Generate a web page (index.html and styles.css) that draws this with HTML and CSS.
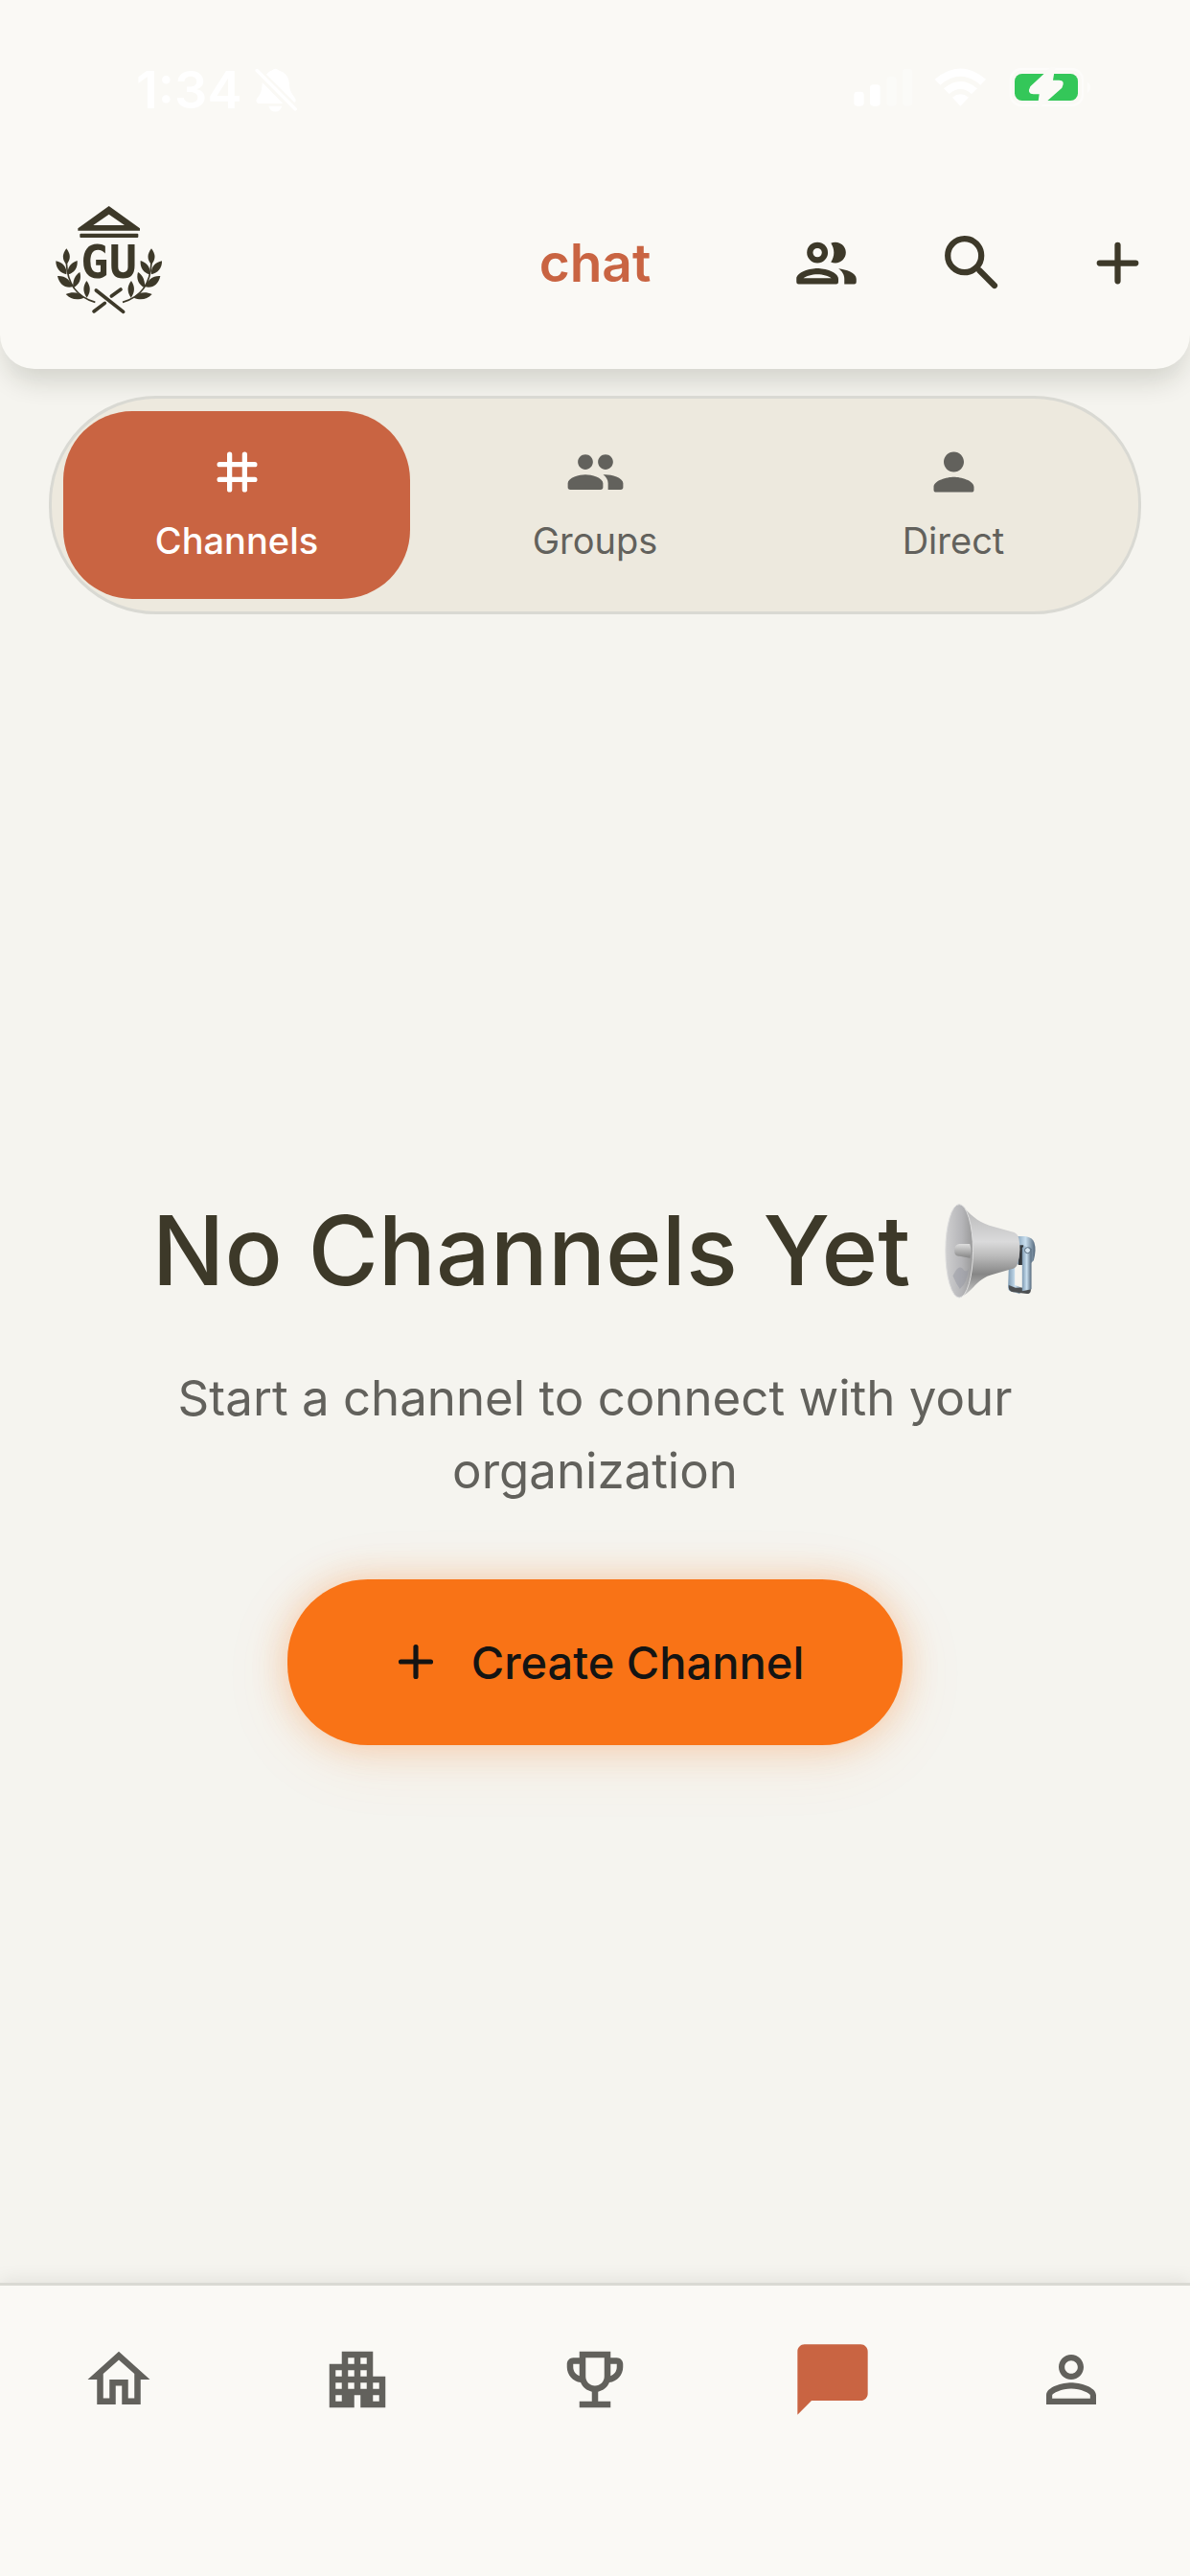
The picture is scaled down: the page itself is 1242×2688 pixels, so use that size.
FILE: index.html
```html
<!DOCTYPE html>
<html lang="en">
<head>
<meta charset="utf-8">
<meta name="viewport" content="width=device-width, initial-scale=1">
<title>Chat</title>
<link rel="stylesheet" href="styles.css">
</head>
<body>
<header class="top">
  <div class="status">
    <div class="status-left">
      <span class="clock">1:34</span>
      <svg class="bell" viewBox="0 0 126 138" aria-hidden="true">
        <path d="M34 22C40 14 46 12 51 10Q61 0 72 10C92 16 102 30 103 50C104 74 112 80 120 92Q126 104 118 106L34 22Z"/>
        <path d="M22 46L84 109H10Q0 104 6 94C16 82 21 74 22 46Z"/>
        <path d="M41 117H81Q76 134 61 134T41 117Z"/>
        <path d="M6 10L121 126" class="slash"/>
      </svg>
    </div>
    <svg class="indicators" viewBox="0 0 900 270" aria-hidden="true">
      <g fill="#fff">
        <rect x="94" y="140" width="31" height="45" rx="10"/>
        <rect x="144" y="118" width="32" height="67" rx="10"/>
        <rect x="196" y="93" width="31" height="92" rx="10" opacity=".3"/>
        <rect x="246" y="68" width="31" height="117" rx="10" opacity=".3"/>
        <path d="M347 101Q427 34 507 101L490 119Q427 66 364 119Z"/>
        <path d="M375 130Q427 86 480 130L462 147Q427 117 392 147Z"/>
        <path d="M402 158Q427 138 453 158L427 185Z"/>
        <path d="M824 110Q834 114 834 126T824 144Z" opacity=".5"/>
      </g>
      <rect x="584" y="69" width="226" height="114" rx="34" fill="none" stroke="#fff" stroke-width="7" opacity=".5"/>
      <rect x="597" y="84" width="198" height="84" rx="23" fill="#34c759"/>
      <path d="M712 62L646 124Q634 147 656 148H674L668 190Q678 190 684 182L745 128Q757 104 736 104H717L724 62Z" fill="#fbfaf7"/>
    </svg>
  </div>
  <div class="toolbar">
    <svg class="logo" viewBox="0 0 450 444" role="img" aria-label="GU">
      <path fill-rule="evenodd" d="M221 45L318 115V122H124V115ZM221 71L172 105H270Z"/>
      <rect x="130" y="131" width="183" height="13" rx="3"/>
      <text x="221" y="270" text-anchor="middle">GU</text>
      <g id="laurel">
        <path d="M88 178C102 196 102 212 88 228C74 212 74 196 88 178Z"/>
        <path d="M55 217C76 221 91 237 88 259C68 255 54 239 55 217Z"/>
        <path d="M122 216C124 239 112 255 93 259C89 239 101 222 122 216Z"/>
        <path d="M60 264C82 262 101 276 107 298C83 303 66 290 60 264Z"/>
        <path d="M130 252C136 273 129 291 109 301C107 280 114 262 130 252Z"/>
        <path d="M86 321C108 311 129 315 143 332C122 341 101 337 86 321Z"/>
        <path d="M151 279C164 296 165 312 152 332C139 314 139 297 151 279Z"/>
        <path class="stem" d="M88 222Q92 322 178 346"/>
      </g>
      <use href="#laurel" transform="matrix(-1 0 0 1 442 0)"/>
      <path class="baton" d="M181 309L266 376M174 375L208 349M229 327L258 306"/>
    </svg>
    <h1 class="page-title">chat</h1>
    <div class="actions">
      <button class="action" aria-label="People"><svg class="icon" viewBox="0 0 24 24"><path fill-rule="evenodd" d="M9 12a3.5 3.5 0 1 0 0-7 3.5 3.5 0 0 0 0 7Zm0-2a1.5 1.5 0 1 1 0-3 1.5 1.5 0 0 1 0 3ZM9 13.75c-2.34 0-7 1.17-7 3.5V18.300q0 .7.700.7H15.300q.7 0 .7-.7V17.250c0-2.330-4.660-3.500-7-3.500ZM4.340 17c.840-.580 2.870-1.250 4.660-1.250s3.820.670 4.660 1.250ZM16.040 13.810c1.160.840 1.960 1.960 1.960 3.440V19h3.300q.7 0 .7-.7V17.250c0-2.020-3.500-3.170-5.960-3.440ZM15 12c1.930 0 3.500-1.570 3.500-3.500S16.930 5 15 5c-.540 0-1.040.130-1.500.350.630.890 1 1.980 1 3.150s-.370 2.260-1 3.150c.460.220.960.350 1.500.350Z"/></svg></button>
      <button class="action" aria-label="Search"><svg class="icon" viewBox="0 0 24 24"><g fill="none" stroke="currentColor" stroke-width="2"><circle cx="9.500" cy="9.500" r="5.600"/><path d="M14.500 14.500L19.500 19.500" stroke-linecap="round"/></g></svg></button>
      <button class="action" aria-label="Add"><svg class="icon" viewBox="0 0 24 24"><path class="line" d="M12 6V18M6 12H18"/></svg></button>
    </div>
  </div>
</header>
<main class="content">
  <nav class="tabs" aria-label="Conversation type">
    <button class="tab active"><svg class="icon-tab" viewBox="0 0 24 24"><path class="line" d="M9 5V19M15 5V19M5 9H19M5 15H19"/></svg><span>Channels</span></button>
    <button class="tab"><svg class="icon-tab" viewBox="0 0 24 24"><path d="M16 11c1.660 0 2.990-1.340 2.990-3S17.660 5 16 5s-3 1.340-3 3 1.340 3 3 3Zm-8 0c1.660 0 2.990-1.340 2.990-3S9.660 5 8 5 5 6.340 5 8s1.340 3 3 3Zm0 2c-2.330 0-7 1.170-7 3.500V18q0 1 1 1H14q1 0 1-1V16.500C15 14.170 10.330 13 8 13Zm8 0c-.290 0-.620.020-.970.050 1.160.840 1.970 1.970 1.970 3.450V19h5q1 0 1-1V16.500c0-2.330-4.670-3.500-7-3.500Z"/></svg><span>Groups</span></button>
    <button class="tab"><svg class="icon-tab" viewBox="0 0 24 24"><path d="M12 12c2.210 0 4-1.790 4-4s-1.790-4-4-4-4 1.790-4 4 1.790 4 4 4Zm0 2c-2.670 0-8 1.340-8 4v1q0 1 1 1H19q1 0 1-1v-1c0-2.660-5.330-4-8-4Z"/></svg><span>Direct</span></button>
  </nav>
  <section class="empty">
    <h2 class="empty-title">No Channels Yet
      <svg class="horn" viewBox="50 45 290 300" role="img" aria-label="Loudspeaker">
        <defs>
          <linearGradient id="cone" x1="0" y1="0" x2="0" y2="1"><stop offset="0" stop-color="#b4b4b4"/><stop offset=".4" stop-color="#dadadb"/><stop offset=".55" stop-color="#bcbcbc"/><stop offset=".75" stop-color="#868686"/><stop offset="1" stop-color="#cfcfcf"/></linearGradient>
          <linearGradient id="mouth" x1="0" y1="0" x2="1" y2="0"><stop offset="0" stop-color="#cfcfd0"/><stop offset=".6" stop-color="#b5b5b8"/><stop offset="1" stop-color="#999"/></linearGradient>
          <linearGradient id="steel" x1="0" y1="0" x2="1" y2="0"><stop offset="0" stop-color="#7f9bb3"/><stop offset=".5" stop-color="#c9dfef"/><stop offset="1" stop-color="#54687b"/></linearGradient>
          <linearGradient id="knob" x1="0" y1="0" x2="0" y2="1"><stop offset="0" stop-color="#dedede"/><stop offset="1" stop-color="#858585"/></linearGradient>
        </defs>
        <path d="M272 150H302Q325 154 330 170Q337 192 328 226L316 238H272Z" fill="url(#steel)"/>
        <path d="M284 178H296V240H280Z" fill="#34383c"/>
        <path d="M250 244H269V303L293 312L284 331L254 322Q248 318 248 308Z" fill="url(#steel)"/>
        <path d="M250 303L271 311H319V320Q318 330 307 330L264 325Q250 321 250 311Z" fill="#4c4f52"/>
        <path d="M292 186Q307 170 321 190V316L292 322Z" fill="url(#steel)"/>
        <circle cx="309" cy="194" r="9" fill="#d5e5f1" stroke="#576b7d" stroke-width="3"/>
        <path d="M93 50C125 68 138 100 189 116L267 138Q280 144 282 160Q290 205 276 240Q272 250 258 253L206 268C144 283 143 322 96 342Z" fill="url(#cone)"/>
        <ellipse cx="95" cy="196" rx="43" ry="146" fill="url(#mouth)" stroke="#dfdfdf" stroke-width="3"/>
        <path d="M75 274Q91 239 104 250Q118 270 125 249Q119 298 97 315Q84 297 75 274Z" fill="#93959f" opacity=".45"/>
        <path d="M128 174H95Q80 176 80 195T96 212L129 218Q136 198 128 174Z" fill="url(#knob)"/>
      </svg>
    </h2>
    <p class="empty-text">Start a channel to connect with your organization</p>
    <button class="create"><svg class="icon-create" viewBox="0 0 24 24"><path class="line" d="M12 6V18M6 12H18"/></svg><span>Create Channel</span></button>
  </section>
</main>
<nav class="bottom" aria-label="Main">
  <a href="#home" aria-label="Home"><svg class="icon-nav" viewBox="0 0 24 24"><path d="M12 5.690l5 4.500V18h-2v-6H9v6H7v-7.810l5-4.500M12 3L2 12h3v8h6v-6h2v6h6v-8h3L12 3z"/></svg></a>
  <a href="#organization" aria-label="Organization"><svg class="icon-nav" viewBox="0 0 24 24"><path d="M17 11V3H7v4H3v14h8v-4h2v4h8V11h-4zM7 19H5v-2h2v2zm0-4H5v-2h2v2zm0-4H5V9h2v2zm4 4H9v-2h2v2zm0-4H9V9h2v2zm0-4H9V5h2v2zm4 8h-2v-2h2v2zm0-4h-2V9h2v2zm0-4h-2V5h2v2zm4 12h-2v-2h2v2zm0-4h-2v-2h2v2z"/></svg></a>
  <a href="#awards" aria-label="Awards"><svg class="icon-nav" viewBox="0 0 24 24"><path d="M19 5h-2V3H7v2H5c-1.100 0-2 .9-2 2v1c0 2.550 1.920 4.630 4.390 4.940.630 1.500 1.980 2.630 3.610 2.960V19H7v2h10v-2h-4v-3.100c1.630-.330 2.980-1.460 3.610-2.960C19.080 12.630 21 10.550 21 8V7c0-1.100-.9-2-2-2zM5 8V7h2v3.820C5.840 10.400 5 9.300 5 8zm7 6c-1.650 0-3-1.350-3-3V5h6v6c0 1.650-1.350 3-3 3zm7-6c0 1.300-.840 2.400-2 2.820V7h2v1z"/></svg></a>
  <a href="#chat" class="current" aria-label="Chat" aria-current="page"><svg class="icon-nav" viewBox="0 0 24 24"><path d="M20 2H4c-1.100 0-2 .9-2 2v18l4-4h14c1.100 0 2-.9 2-2V4c0-1.100-.9-2-2-2z"/></svg></a>
  <a href="#profile" aria-label="Profile"><svg class="icon-nav" viewBox="0 0 24 24"><path d="M12 5.900c1.160 0 2.100.940 2.100 2.100s-.940 2.100-2.100 2.100S9.900 9.160 9.900 8s.940-2.100 2.100-2.100m0 9c2.970 0 6.100 1.460 6.100 2.100v1.100H5.900V17c0-.640 3.130-2.100 6.100-2.100M12 4C9.790 4 8 5.790 8 8s1.790 4 4 4 4-1.790 4-4-1.790-4-4-4zm0 9c-2.670 0-8 1.340-8 4v3h16v-3c0-2.660-5.330-4-8-4z"/></svg></a>
</nav>
</body>
</html>
```
FILE: styles.css
```css
* {
  box-sizing: border-box;
}

body {
  margin: 0;
  min-height: 100vh;
  display: flex;
  flex-direction: column;
  background: #f5f4ef;
  color: #3d3929;
  font-family: Inter, "Liberation Sans", sans-serif;
}

button {
  border: 0;
  padding: 0;
  background: none;
  color: inherit;
  font: inherit;
}

svg {
  display: block;
  flex: none;
  fill: currentColor;
}

.line {
  fill: none;
  stroke: currentColor;
  stroke-width: 2;
  stroke-linecap: round;
}

/* Header */
.top {
  background: #faf9f5;
  border-radius: 0 0 36px 36px;
  box-shadow: 0 18px 28px -6px rgba(24, 28, 10, 0.16);
}

.status {
  height: 163px;
  padding: 24px 82px 0 142px;
  display: flex;
  align-items: center;
  justify-content: space-between;
}

.status-left {
  display: flex;
  align-items: center;
  gap: 14px;
  color: #fff;
}

.clock {
  font-size: 54px;
  font-weight: 600;
}

.bell {
  width: 44px;
  height: 48px;
}

.slash {
  stroke: #fff;
  stroke-width: 10;
  stroke-linecap: round;
}

.indicators {
  width: 300px;
  height: 90px;
}

.toolbar {
  height: 222px;
  display: grid;
  grid-template-columns: 1fr auto 1fr;
  align-items: center;
}

.logo {
  width: 150px;
  height: 148px;
  margin-left: 40px;
}

.logo text {
  font: bold 146px "DejaVu Sans Mono", monospace;
}

.stem {
  fill: none;
  stroke: currentColor;
  stroke-width: 5;
}

.baton {
  fill: none;
  stroke: currentColor;
  stroke-width: 11;
  stroke-linecap: round;
}

.page-title {
  margin: 0;
  color: #c96442;
  font-size: 55px;
  font-weight: 600;
}

.actions {
  display: flex;
  justify-content: flex-end;
}

.action {
  width: 152px;
  height: 152px;
  display: grid;
  place-items: center;
}

.icon {
  width: 75px;
  height: 75px;
}

/* Content */
.content {
  flex: 1;
  padding: 28px 51px 0;
  display: flex;
  flex-direction: column;
}

.tabs {
  padding: 13px 12px;
  display: grid;
  grid-template-columns: repeat(3, 1fr);
  gap: 12px;
  border: 3px solid #d9d9d3;
  border-radius: 112px;
  background: #ede9de;
}

.tab {
  height: 196px;
  padding-bottom: 6px;
  display: flex;
  flex-direction: column;
  align-items: center;
  justify-content: center;
  gap: 16px;
  border-radius: 72px;
  color: #62615c;
  font-size: 38px;
  line-height: 48px;
}

.tab.active {
  background: #c96442;
  color: #fff;
  font-weight: 500;
}

.icon-tab {
  width: 63px;
  height: 63px;
}

.empty {
  flex: 1;
  padding-top: 38px;
  display: flex;
  flex-direction: column;
  align-items: center;
  justify-content: center;
  text-align: center;
}

.empty-title {
  margin: 0 0 52px;
  display: flex;
  align-items: center;
  gap: 36px;
  font-size: 100px;
  font-weight: 500;
  line-height: 128px;
}

.horn {
  width: 97px;
  height: 100px;
}

.empty-text {
  max-width: 960px;
  margin: 0 0 75px;
  color: #62615c;
  font-size: 51px;
  line-height: 76px;
}

.create {
  height: 173px;
  padding: 0 103px;
  display: flex;
  align-items: center;
  gap: 27px;
  border-radius: 84px;
  background: #f97316;
  box-shadow: 0 0 36px rgba(249, 115, 22, 0.3), 0 12px 72px rgba(249, 115, 22, 0.1);
  color: #141413;
  font-size: 47px;
  font-weight: 500;
}

.icon-create {
  width: 62px;
  height: 62px;
}

/* Bottom navigation */
.bottom {
  height: 306px;
  padding-top: 54px;
  display: grid;
  grid-template-columns: repeat(5, 1fr);
  align-items: start;
  border-top: 3px solid #d9d9d3;
  background: #faf9f5;
  box-shadow: 0 -3px 18px rgba(24, 28, 10, 0.08);
}

.bottom a {
  height: 88px;
  display: grid;
  place-items: center;
  color: #62615c;
}

.bottom .current {
  color: #c96442;
}

.icon-nav {
  width: 78px;
  height: 78px;
}

.current .icon-nav {
  width: 88px;
  height: 88px;
}
```
